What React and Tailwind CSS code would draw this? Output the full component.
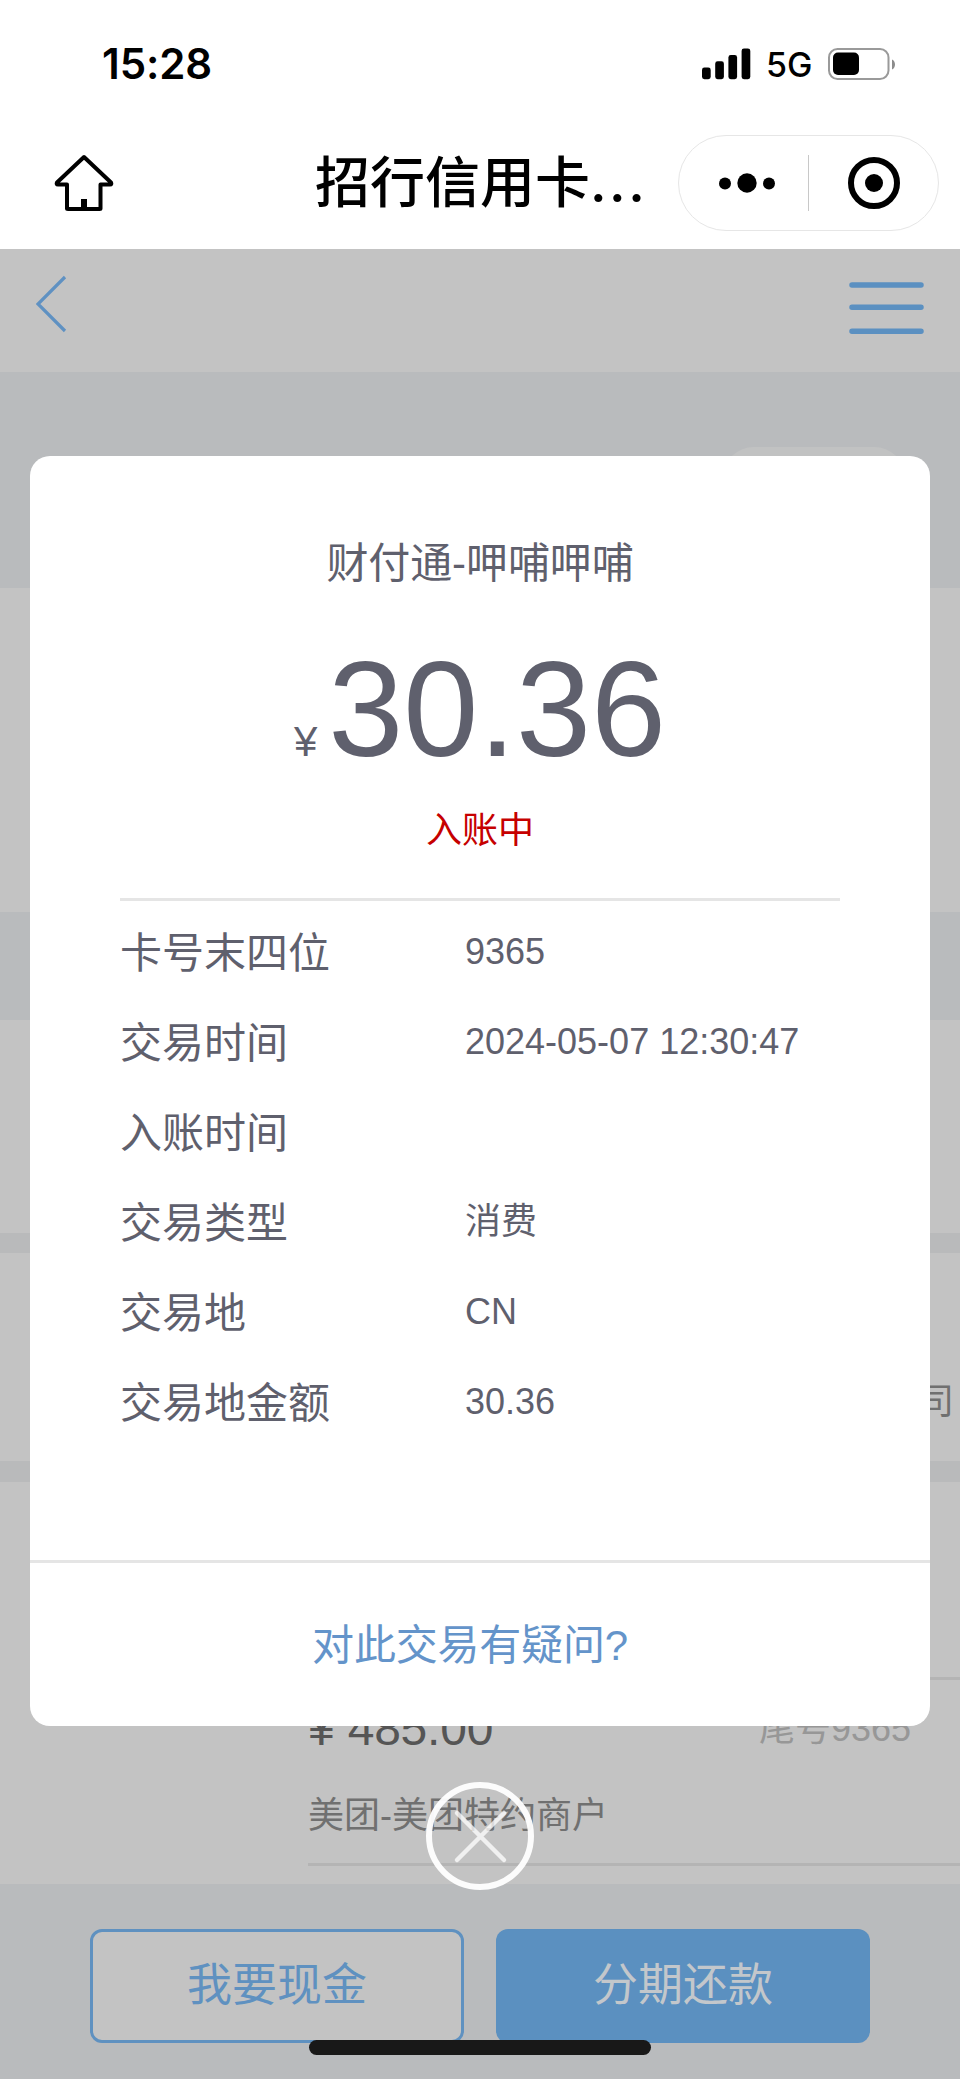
const details = [
  { label: "卡号末四位", value: "9365" },
  { label: "交易时间", value: "2024-05-07 12:30:47" },
  { label: "入账时间", value: "" },
  { label: "交易类型", value: "消费" },
  { label: "交易地", value: "CN" },
  { label: "交易地金额", value: "30.36" },
];

function StatusBar() {
  return (
    <div className="flex h-[126px] items-start justify-between pl-[102px] pr-[64px] pt-[39px] font-['Inter',sans-serif]">
      <span className="text-[42px] font-semibold leading-[50px] tracking-[-0.1px]">15:28</span>
      <div className="flex h-[50px] items-center">
        <svg width="49" height="32" viewBox="0 0 49 32" className="mr-[15px]">
          <rect x="0" y="19.5" width="8.7" height="11.7" rx="2.4" />
          <rect x="13.2" y="13.3" width="8.7" height="17.9" rx="2.4" />
          <rect x="26.4" y="7" width="8.7" height="24.2" rx="2.4" />
          <rect x="39.6" y="0.5" width="8.7" height="30.7" rx="2.4" />
        </svg>
        <span className="w-[62px] pt-[2px] text-[34px] font-medium leading-[40px]">5G</span>
        <svg width="68" height="32" viewBox="0 0 68 32">
          <rect x="1" y="1" width="59.5" height="30" rx="8.5" fill="none" stroke="#9a9a9a" strokeWidth="2" />
          <rect x="5" y="4.5" width="26" height="22.5" rx="5" />
          <path d="M64 11.5c4 1.5 4 8.500 0 10z" fill="#8c8c8c" />
        </svg>
      </div>
    </div>
  );
}

function TitleBar() {
  return (
    <div className="flex h-[123px] items-start pl-[54px] pr-[21px] pt-[9px]">
      <svg width="60" height="58" viewBox="0 0 60 58" className="mt-[19px]" fill="none" stroke="#000" strokeWidth="4" strokeLinejoin="round">
        <path d="M30 3 3 28.500 Q2 30.500 4 30.500H13V54.500Q13 55 14 55H45.500Q46.500 55 46.500 54.500V30.500H56Q58 30.500 57 28.500Z" />
        <path d="M30 45V55" strokeWidth="6" />
      </svg>
      <h1 className="ml-[201px] w-[363px] whitespace-nowrap text-[55px] font-medium leading-[96px]">
        招行信用卡
        <span className="font-['Inter',sans-serif] text-[52px] font-semibold tracking-[2.5px]">...</span>
      </h1>
      <div className="flex h-[96px] w-[261px] items-center rounded-full border border-[#e6e6e6]">
        <svg width="129" height="60" viewBox="0 0 129 60">
          <circle cx="46" cy="30.500" r="6" />
          <circle cx="68" cy="30" r="9.700" />
          <circle cx="90" cy="30.500" r="6" />
        </svg>
        <div className="h-[56px] w-px bg-[#c8c8c8]" />
        <svg width="129" height="60" viewBox="0 0 129 60">
          <circle cx="65" cy="30" r="23" fill="none" stroke="#000" strokeWidth="6" />
          <circle cx="65" cy="30" r="9" />
        </svg>
      </div>
    </div>
  );
}

function PageNav() {
  return (
    <div className="flex h-[123px] justify-between px-[36px] pt-[26px]">
      <svg width="32" height="60" viewBox="0 0 32 60" fill="none" stroke="#5f91c2" strokeWidth="3.200">
        <path d="M29 2 2 29 29 56" />
      </svg>
      <svg width="75" height="64" viewBox="0 0 75 64" stroke="#5b90c1" strokeWidth="5.500" strokeLinecap="round">
        <path d="M3 10H72M3 32.200H72M3 56.300H72" />
      </svg>
    </div>
  );
}

function Background() {
  return (
    <div className="flex h-[1830px] flex-col bg-[#c3c3c3]">
      <PageNav />
      <div className="flex h-[216px] justify-end bg-[#b9bbbd] pr-[54px] pt-[75px]">
        <div className="h-[64px] w-[184px] rounded-full bg-[#c1c2c2]" />
      </div>
      <div className="h-[324px]" />
      <div className="h-[108px] bg-[#b9bbbd]" />
      <div className="h-[213px]" />
      <div className="h-[20px] bg-[#b9babb]" />
      <div className="flex h-[208px] items-center justify-end pr-[6px] pt-[90px] text-[36px] text-[#707070]">
        <span>司</span>
      </div>
      <div className="h-[21px] bg-[#b9babb]" />
      <div className="flex h-[402px] flex-col pl-[308px]">
        <div className="h-[198px] border-b-[3px] border-[#b4b4b4]" />
        <div className="h-[186px] border-b-[3px] border-[#b4b4b4] pt-[16px]">
          <div className="flex items-center justify-between pr-[49px]">
            <span className="text-[48px] leading-[66px] tracking-[-0.2px] text-[#555]">¥ 485.00</span>
            <span className="text-[36px] leading-[66px] text-[#979797]">尾号9365</span>
          </div>
          <p className="mt-[27px] text-[36px] leading-[54px] text-[#707070]">美团-美团特约商户</p>
        </div>
      </div>
      <div className="flex h-[195px] justify-between bg-[#b9bbbd] px-[90px] pt-[45px]">
        <button type="button" className="h-[114px] w-[374px] rounded-[12px] border-[3px] border-[#5f91c0] bg-[#c3c3c3] text-[45px] text-[#5f91c0]">
          我要现金
        </button>
        <button type="button" className="h-[114px] w-[374px] rounded-[12px] bg-[#5b90c0] text-[45px] text-[#c3c7cb]">
          分期还款
        </button>
      </div>
    </div>
  );
}

function TransactionDialog() {
  return (
    <div className="absolute left-[30px] top-[456px] flex h-[1270px] w-[900px] flex-col rounded-[20px] bg-white text-[#5f606d]">
      <div className="mx-[90px] flex h-[445px] flex-col items-center border-b-[3px] border-[#e5e5e5]">
        <p className="mt-[78px] text-[42px] leading-[60px] tracking-[-0.1px]">财付通-呷哺呷哺</p>
        <div className="mt-[41px] flex h-[150px] items-baseline gap-[11px] leading-[150px]">
          <span className="text-[42px]">¥</span>
          <span className="text-[135px]">30.36</span>
        </div>
        <p className="mt-[19px] text-[36px] leading-[54px] text-[#c60000]">入账中</p>
      </div>
      <dl className="mx-[90px] flex-1 pt-[6px]">
        {details.map((item) => (
          <div key={item.label} className="flex h-[90px] items-center">
            <dt className="w-[345px] pt-[2px] text-[42px]">{item.label}</dt>
            <dd className="text-[36px]">{item.value}</dd>
          </div>
        ))}
      </dl>
      <button type="button" className="h-[166px] border-t-[3px] border-[#e5e5e5] pr-[20px] pt-[2px] text-[42px] tracking-[-0.2px] text-[#6494ca]">
        对此交易有疑问?
      </button>
    </div>
  );
}

function CloseButton() {
  return (
    <svg className="absolute left-[426px] top-[1782px]" width="108" height="108" viewBox="0 0 108 108" fill="none" stroke="#fff">
      <circle cx="54" cy="54" r="51" strokeWidth="6" opacity="0.95" />
      <path d="M31 31 78 78M78 31 31 78" strokeWidth="4.500" strokeLinecap="round" opacity="0.75" />
    </svg>
  );
}

function App() {
  return (
    <div className="relative h-[2079px] w-[960px] overflow-hidden bg-white font-['Liberation_Sans','Noto_Sans_CJK_SC',sans-serif] text-black">
      <StatusBar />
      <TitleBar />
      <Background />
      <TransactionDialog />
      <CloseButton />
      {/* home indicator */}
      <div className="absolute left-[309px] top-[2040px] h-[15px] w-[342px] rounded-full bg-[#181818]" />
    </div>
  );
}

export default App;
